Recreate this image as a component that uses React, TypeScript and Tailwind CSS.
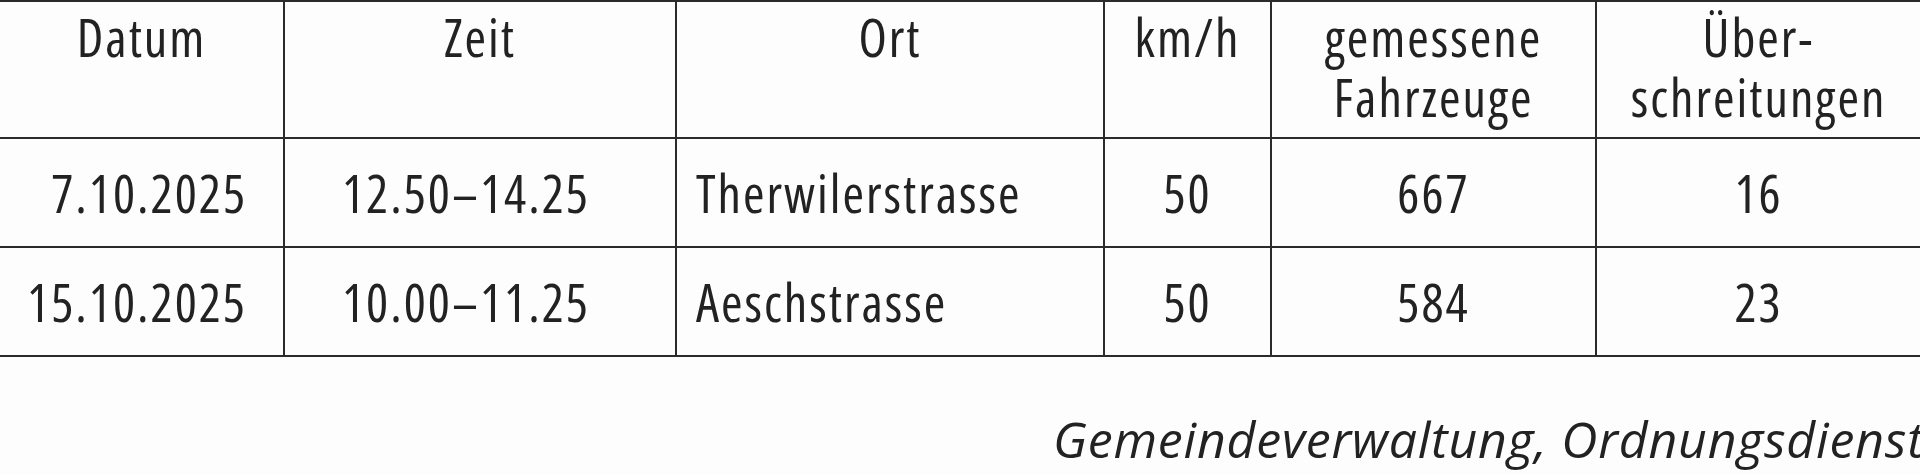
const rows = [
  { date: "7.10.2025", time: "12.50–14.25", place: "Therwilerstrasse", speed: "50", measured: "667", over: "16" },
  { date: "15.10.2025", time: "10.00–11.25", place: "Aeschstrasse", speed: "50", measured: "584", over: "23" },
];

const cell = "border-2 border-[#2b2b2b] align-middle";

export default function App() {
  return (
    <div
      className="min-h-[475px] w-[1920px] overflow-hidden bg-[#fdfdfd] text-[50px] leading-[60px] text-[#222]"
      style={{ fontFamily: '"Open Sans", "DejaVu Sans", sans-serif' }}
    >
      <table className="w-[1920px] table-fixed border-collapse border-x-0 text-[52px] font-stretch-condensed tracking-[2px]">
        <colgroup>
          <col className="w-[284px]" />
          <col className="w-[392px]" />
          <col className="w-[428px]" />
          <col className="w-[167px]" />
          <col className="w-[325px]" />
          <col className="w-[324px]" />
        </colgroup>
        <thead>
          <tr className="h-[137px]">
            <th className={`${cell} border-l-0 pt-[5px] align-top font-normal`}>Datum</th>
            <th className={`${cell} pt-[5px] align-top font-normal`}>Zeit</th>
            <th className={`${cell} pt-[5px] align-top font-normal`}>Ort</th>
            <th className={`${cell} pt-[5px] align-top font-normal`}>km/h</th>
            <th className={`${cell} pt-[5px] align-top font-normal`}>
              gemessene
              <br />
              Fahrzeuge
            </th>
            <th className={`${cell} border-r-0 pt-[5px] align-top font-normal`}>
              Über-
              <br />
              schreitungen
            </th>
          </tr>
        </thead>
        <tbody>
          {rows.map((r) => (
            <tr key={r.date} className="h-[109px]">
              <td className={`${cell} border-l-0 pr-[36px] text-right`}>{r.date}</td>
              <td className={`${cell} pl-[57px]`}>{r.time}</td>
              <td className={`${cell} pl-[19px]`}>{r.place}</td>
              <td className={`${cell} text-center`}>{r.speed}</td>
              <td className={`${cell} text-center`}>{r.measured}</td>
              <td className={`${cell} border-r-0 text-center`}>{r.over}</td>
            </tr>
          ))}
        </tbody>
      </table>

      <p className="mt-[52px] ml-[1053px] whitespace-nowrap italic tracking-[0.8px]">
        Gemeindeverwaltung, Ordnungsdienst
      </p>
    </div>
  );
}
